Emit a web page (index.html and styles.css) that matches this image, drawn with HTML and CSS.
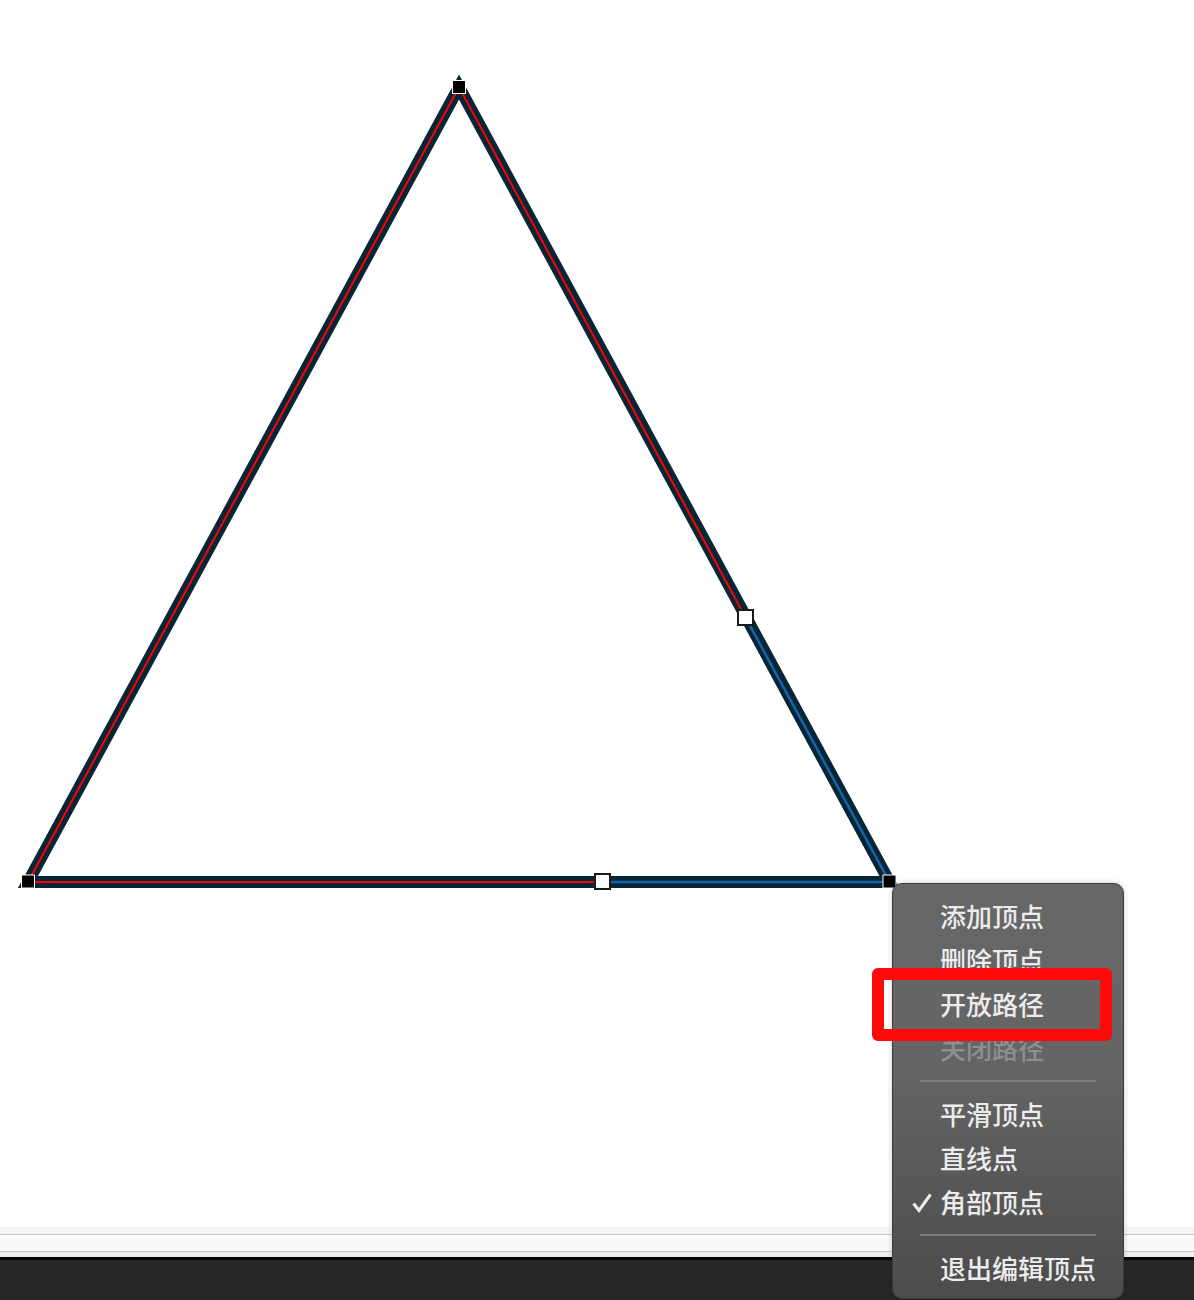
FILE: index.html
```html
<!DOCTYPE html>
<html lang="zh-CN">
<head>
<meta charset="utf-8">
<title>编辑顶点</title>
<link rel="stylesheet" href="styles.css">
</head>
<body>
<div class="page">
  <div class="canvas">
    <svg class="drawing" width="1194" height="1227" viewBox="0 0 1194 1227" xmlns="http://www.w3.org/2000/svg">
      <path d="M28 882 L459 87 L889.5 882 Z" fill="none" stroke="#062636" stroke-width="12" stroke-linejoin="miter" stroke-miterlimit="10"/>
      <path d="M602.5 882 L28 882 L459 87 L745.5 617.5" fill="none" stroke="#ff0000" stroke-width="2" stroke-linejoin="miter"/>
      <path d="M745.5 617.5 L889.5 882 L602.5 882" fill="none" stroke="#1663ad" stroke-width="2.5" stroke-linejoin="miter"/>
      <rect x="452.5" y="80.5" width="13" height="13" fill="#000" stroke="#fff" stroke-width="1"/>
      <rect x="21.5" y="875" width="13" height="13" fill="#000" stroke="#fff" stroke-width="1"/>
      <rect x="883" y="875" width="13" height="13" fill="#000" stroke="#fff" stroke-width="1"/>
      <rect x="595" y="874" width="15" height="15" fill="#fff" stroke="#1a1a1a" stroke-width="2"/>
      <rect x="738" y="610" width="15" height="15" fill="#fff" stroke="#1a1a1a" stroke-width="2"/>
    </svg>
  </div>
  <div class="statusbar">
    <div class="band-top"></div>
    <div class="band-mid"></div>
    <div class="band-low"></div>
    <div class="band-black"></div>
    <div class="band-dark"></div>
  </div>

  <div class="menu">
    <div class="item">添加顶点</div>
    <div class="item">删除顶点</div>
    <div class="item">开放路径</div>
    <div class="item disabled">关闭路径</div>
    <div class="sep"></div>
    <div class="item">平滑顶点</div>
    <div class="item">直线点</div>
    <div class="item checked"><svg class="check" width="20" height="20" viewBox="0 0 20 20" xmlns="http://www.w3.org/2000/svg"><polyline points="1.5,10.5 7,17.5 18.5,1.5" fill="none" stroke="#ececec" stroke-width="3" stroke-linecap="butt" stroke-linejoin="miter"/></svg>角部顶点</div>
    <div class="sep"></div>
    <div class="item">退出编辑顶点</div>
  </div>
  <div class="highlight"></div>
</div>
</body>
</html>
```
FILE: styles.css
```css
html, body {
  margin: 0;
  padding: 0;
  background: #ffffff;
}

.page {
  position: relative;
  width: 1194px;
  height: 1300px;
  overflow: hidden;
  font-family: "Noto Sans CJK SC", "Noto Sans", sans-serif;
}

.canvas {
  height: 1227px;
  background: #ffffff;
}

.drawing {
  display: block;
}

.statusbar {
  display: flex;
  flex-direction: column;
  height: 73px;
}

.band-top {
  height: 7px;
  background: #f5f5f5;
  border-bottom: 1px solid #c6c6c6;
}

.band-mid {
  height: 16px;
  background: #fafafa;
  border-bottom: 1px solid #c2c2c2;
}

.band-low {
  height: 5px;
  background: #f0f0f0;
}

.band-black {
  height: 3px;
  background: #050505;
}

.band-dark {
  flex: 1;
  background: #272727;
}

.menu {
  position: absolute;
  left: 892px;
  top: 883px;
  width: 230px;
  height: 404px;
  box-sizing: content-box;
  border: 1px solid #3a3a3a;
  border-radius: 10px;
  background: linear-gradient(#676767 0%, #646464 45%, #4c4c4c 100%);
  box-shadow: 0 0 6px rgba(0, 0, 0, 0.18);
  padding-top: 10px;
  display: flex;
  flex-direction: column;
}

.item {
  position: relative;
  height: 44px;
  line-height: 44px;
  padding-left: 47px;
  font-size: 26px;
  font-weight: 500;
  color: #ececec;
  white-space: nowrap;
}

.item.disabled {
  color: #8e8e8e;
}

.check {
  position: absolute;
  left: 19px;
  top: 13px;
}

.sep {
  height: 22px;
  display: flex;
  align-items: center;
  padding: 0 27px;
}

.sep::before {
  content: "";
  flex: 1;
  height: 2px;
  background: #7c7c7c;
}

.highlight {
  position: absolute;
  left: 872px;
  top: 968px;
  width: 240px;
  height: 73px;
  box-sizing: border-box;
  border: 12px solid #ff0a0a;
  border-radius: 6px;
}
```
